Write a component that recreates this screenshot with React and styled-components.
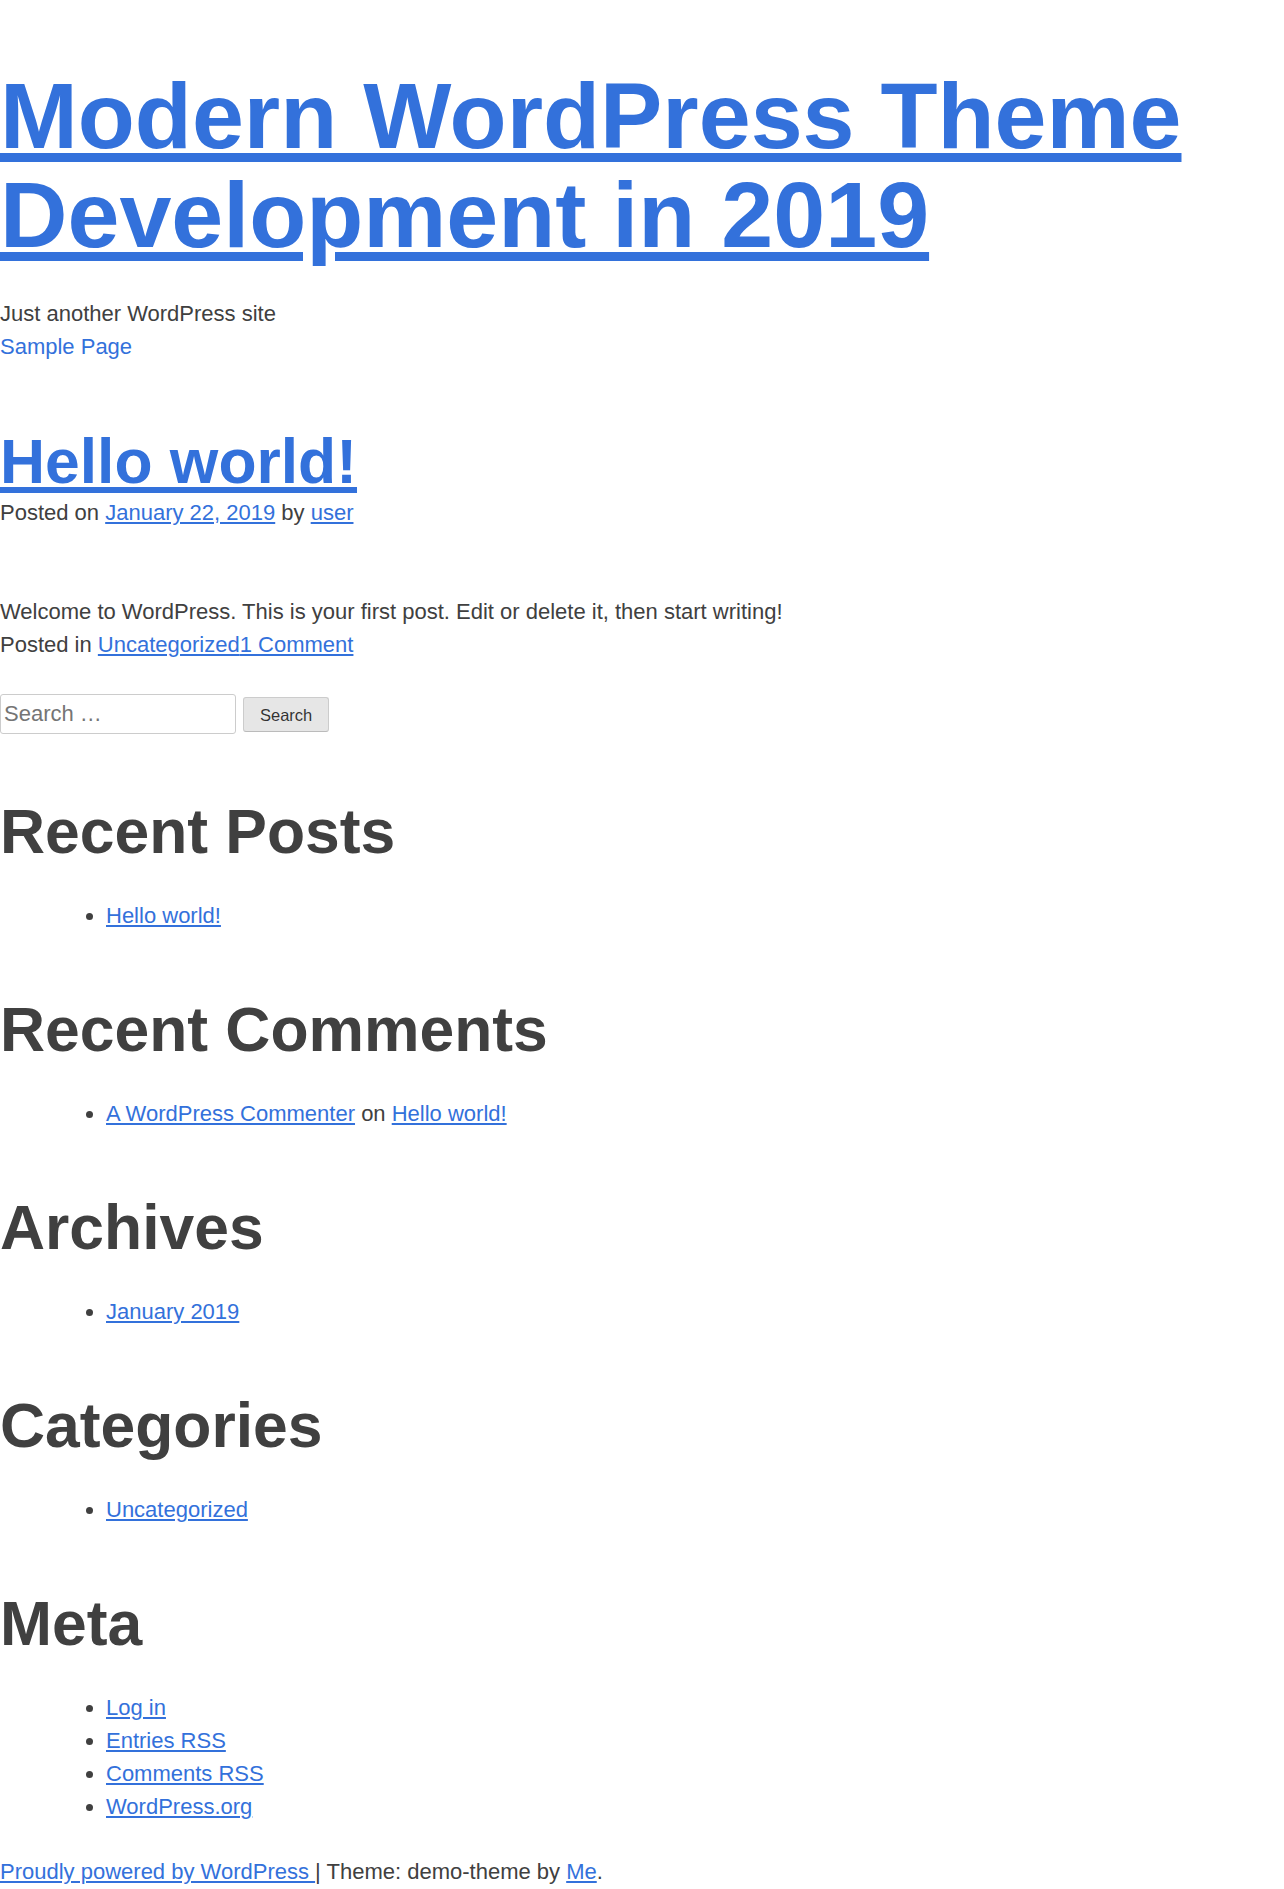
import React from "react";
import styled, { createGlobalStyle } from "styled-components";

const BLUE = "#3371db";
const TEXT = "#404040";

const GlobalStyle = createGlobalStyle`
  html, body {
    margin: 0;
    padding: 0;
    background: #fff;
  }
  body {
    font-family: "Liberation Sans", Arial, Helvetica, sans-serif;
    font-size: 22px;
    line-height: 1.5;
    color: ${TEXT};
  }
  * { box-sizing: border-box; }
`;

const Page = styled.div`
  padding-top: 66px;
`;

const SiteHeader = styled.header`
  display: block;
`;

const SiteTitle = styled.h1`
  margin: 0 0 33px;
  font-size: 93.4px;
  line-height: 99px;
  font-weight: 700;
`;

const Link = styled.a`
  color: ${BLUE};
  text-decoration: ${(p) => (p.$plain ? "none" : "underline")};
`;

const Description = styled.p`
  margin: 0;
`;

const MainNav = styled.nav`
  display: block;
`;

const NavList = styled.ul`
  list-style: none;
  margin: 0;
  padding: 0;
`;

const Article = styled.article`
  margin-top: 66px;
`;

const EntryTitle = styled.h2`
  margin: 0 0 2px;
  font-size: 62.4px;
  line-height: 65px;
  font-weight: 700;
`;

const EntryMeta = styled.div`
  line-height: 33px;
`;

const EntryContent = styled.div`
  margin-top: 66px;
  p {
    margin: 0;
  }
`;

const EntryFooter = styled.footer`
  line-height: 33px;
`;

const Sidebar = styled.aside`
  margin-top: 33px;
  display: flex;
  flex-direction: column;
  gap: 65px;
`;

const Widget = styled.section`
  margin-bottom: ${(p) => (p.$extra ? `${p.$extra}px` : "0")};
`;

const SearchForm = styled.form`
  display: flex;
  align-items: center;
  gap: 7px;
  margin: 0;
`;

const SearchField = styled.input`
  width: 236px;
  height: 40px;
  border: 1px solid #ccc;
  border-radius: 3px;
  padding: 3px;
  font-family: "Liberation Sans", Arial, sans-serif;
  font-size: 22px;
  color: #666;
  background: #fff;
  &::placeholder {
    color: #757575;
  }
`;

const SearchButton = styled.button`
  height: 35px;
  padding: 3px 16px 0;
  border: 1px solid;
  border-color: #ccc #ccc #bbb;
  border-radius: 3px;
  background: #e6e6e6;
  color: rgba(0, 0, 0, 0.8);
  font-family: "Liberation Sans", Arial, sans-serif;
  font-size: 16.5px;
  line-height: 1;
`;

const WidgetTitle = styled.h2`
  margin: 0 0 35px;
  font-size: 62.4px;
  line-height: 65px;
  font-weight: 700;
  color: ${TEXT};
`;

const WidgetList = styled.ul`
  margin: 0 0 0 66px;
  padding-left: 40px;
  line-height: 33px;
  list-style: disc;
`;

const SiteFooter = styled.footer`
  margin-top: 32px;
  line-height: 33px;
`;

const widgets = [
  { title: "Recent Posts", items: [[{ link: "Hello world!" }]] },
  {
    title: "Recent Comments",
    items: [[{ link: "A WordPress Commenter" }, { text: " on " }, { link: "Hello world!" }]],
  },
  { title: "Archives", items: [[{ link: "January 2019" }]] },
  { title: "Categories", items: [[{ link: "Uncategorized" }]] },
  {
    title: "Meta",
    items: [
      [{ link: "Log in" }],
      [{ link: "Entries RSS" }],
      [{ link: "Comments RSS" }],
      [{ link: "WordPress.org" }],
    ],
  },
];

export default function App() {
  return (
    <Page>
      <GlobalStyle />
      <SiteHeader>
        <SiteTitle>
          <Link href="#">Modern WordPress Theme Development in 2019</Link>
        </SiteTitle>
        <Description>Just another WordPress site</Description>
        <MainNav>
          <NavList>
            <li>
              <Link $plain href="#">Sample Page</Link>
            </li>
          </NavList>
        </MainNav>
      </SiteHeader>

      <Article>
        <header>
          <EntryTitle>
            <Link href="#">Hello world!</Link>
          </EntryTitle>
          <EntryMeta>
            Posted on <Link href="#">January 22, 2019</Link> by <Link href="#">user</Link>
          </EntryMeta>
        </header>
        <EntryContent>
          <p>Welcome to WordPress. This is your first post. Edit or delete it, then start writing!</p>
        </EntryContent>
        <EntryFooter>
          Posted in <Link href="#">Uncategorized</Link>
          <Link href="#">1 Comment</Link>
        </EntryFooter>
      </Article>

      <Sidebar>
        <Widget>
          <SearchForm onSubmit={(e) => e.preventDefault()}>
            <SearchField type="search" placeholder="Search …" />
            <SearchButton type="submit">Search</SearchButton>
          </SearchForm>
        </Widget>
        {widgets.map((w) => (
          <Widget key={w.title}>
            <WidgetTitle>{w.title}</WidgetTitle>
            <WidgetList>
              {w.items.map((parts, i) => (
                <li key={i}>
                  {parts.map((p, j) =>
                    p.link ? (
                      <Link key={j} href="#">
                        {p.link}
                      </Link>
                    ) : (
                      <React.Fragment key={j}>{p.text}</React.Fragment>
                    )
                  )}
                </li>
              ))}
            </WidgetList>
          </Widget>
        ))}
      </Sidebar>

      <SiteFooter>
        <Link href="#">Proudly powered by WordPress </Link>| Theme: demo-theme by{" "}
        <Link href="#">Me</Link>.
      </SiteFooter>
    </Page>
  );
}
